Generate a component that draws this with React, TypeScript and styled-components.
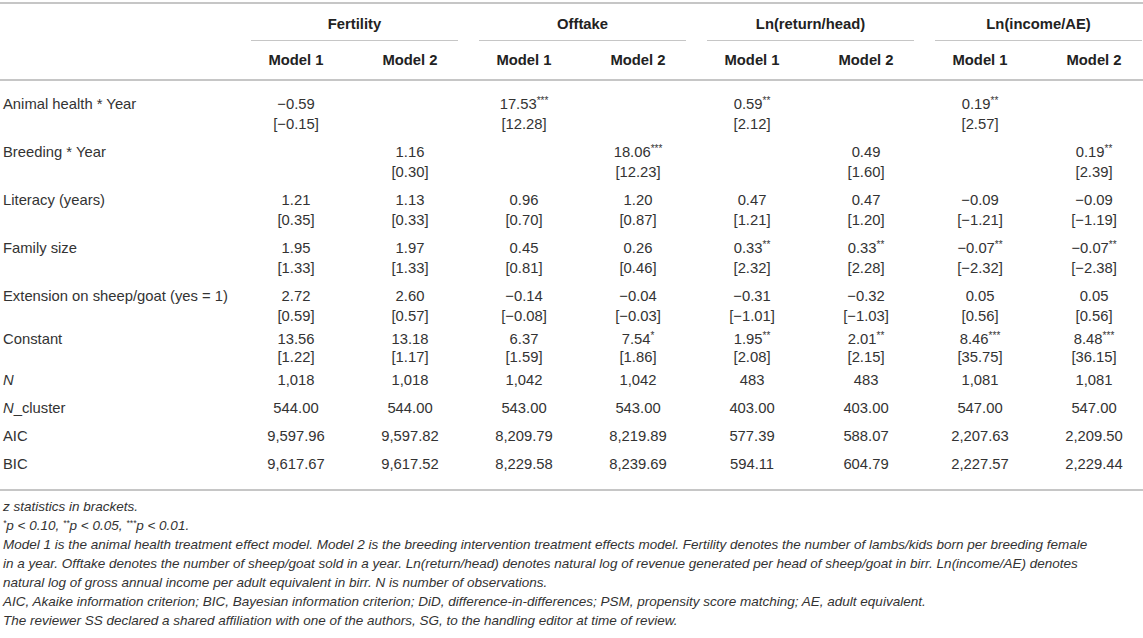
import React from "react";
import styled, { createGlobalStyle } from "styled-components";

const GlobalStyle = createGlobalStyle`
  html, body { margin: 0; padding: 0; background: #fff; overflow: hidden; }
  body { font-family: "Liberation Sans", Arial, Helvetica, sans-serif; color: #333; }
`;

const Page = styled.div`
  padding-top: 2px;
  width: 1151px;
`;

const Table = styled.table`
  width: 1151px;
  table-layout: fixed;
  border-collapse: collapse;
  font-size: 14.8px;
  line-height: 20px;
  border-top: 2px solid #c6c6c6;
  border-bottom: 2px solid #c6c6c6;
`;

const LabelCol = styled.col`
  width: 239px;
`;

const DataCol = styled.col`
  width: 114px;
`;

const HeadRow = styled.tr<{ $bottom?: boolean }>`
  border-bottom: ${(p) => (p.$bottom ? "2px solid #c6c6c6" : "none")};
`;

const GroupTh = styled.th`
  padding: 10px 0 0;
  font-weight: bold;
  color: #222;
  text-align: center;
`;

const GroupLabel = styled.span`
  display: block;
  margin: 0 9px 0 12px;
  padding-bottom: 6px;
  border-bottom: 1px solid #c6c6c6;
`;

const ModelTh = styled.th`
  padding: 9px 0 9px;
  font-weight: bold;
  color: #222;
  text-align: center;
`;

const BodyRow = styled.tr<{ $first?: boolean; $last?: boolean; $tight?: boolean }>`
  & > td {
    padding-top: ${(p) => (p.$first ? "13px" : p.$tight ? "0px" : "4px")};
    padding-bottom: ${(p) => (p.$last ? "15px" : p.$tight ? "0px" : "4px")};
    line-height: ${(p) => (p.$tight ? "18px" : "20px")};
    vertical-align: top;
  }
`;

const LabelCell = styled.td`
  text-align: left;
  padding-left: 3px;
`;

const ValueCell = styled.td`
  text-align: center;
`;

const Line = styled.div`
  white-space: nowrap;
`;

const Stars = styled.sup`
  font-size: 10px;
  line-height: 0;
  vertical-align: 5px;
`;

const Italic = styled.i`
  font-style: italic;
`;

const Notes = styled.div`
  padding: 6px 0 0 3px;
  font-size: 13.5px;
  line-height: 19px;
  font-style: italic;
  color: #333;
  width: 1130px;
`;

const Note = styled.div`
  white-space: nowrap;
`;

const NoteStar = styled.sup`
  font-size: 8.5px;
  line-height: 0;
  vertical-align: 4px;
`;

type Cell = string | [string, string] | null;

interface Row {
  label: React.ReactNode;
  cells: Cell[];
  tight?: boolean;
}

const rows: Row[] = [
  {
    label: "Animal health * Year",
    cells: [["−0.59", "[−0.15]"], null, ["17.53***", "[12.28]"], null, ["0.59**", "[2.12]"], null, ["0.19**", "[2.57]"], null],
  },
  {
    label: "Breeding * Year",
    cells: [null, ["1.16", "[0.30]"], null, ["18.06***", "[12.23]"], null, ["0.49", "[1.60]"], null, ["0.19**", "[2.39]"]],
  },
  {
    label: "Literacy (years)",
    cells: [["1.21", "[0.35]"], ["1.13", "[0.33]"], ["0.96", "[0.70]"], ["1.20", "[0.87]"], ["0.47", "[1.21]"], ["0.47", "[1.20]"], ["−0.09", "[−1.21]"], ["−0.09", "[−1.19]"]],
  },
  {
    label: "Family size",
    cells: [["1.95", "[1.33]"], ["1.97", "[1.33]"], ["0.45", "[0.81]"], ["0.26", "[0.46]"], ["0.33**", "[2.32]"], ["0.33**", "[2.28]"], ["−0.07**", "[−2.32]"], ["−0.07**", "[−2.38]"]],
  },
  {
    label: "Extension on sheep/goat (yes = 1)",
    cells: [["2.72", "[0.59]"], ["2.60", "[0.57]"], ["−0.14", "[−0.08]"], ["−0.04", "[−0.03]"], ["−0.31", "[−1.01]"], ["−0.32", "[−1.03]"], ["0.05", "[0.56]"], ["0.05", "[0.56]"]],
  },
  {
    label: "Constant",
    tight: true,
    cells: [["13.56", "[1.22]"], ["13.18", "[1.17]"], ["6.37", "[1.59]"], ["7.54*", "[1.86]"], ["1.95**", "[2.08]"], ["2.01**", "[2.15]"], ["8.46***", "[35.75]"], ["8.48***", "[36.15]"]],
  },
  {
    label: <Italic>N</Italic>,
    cells: ["1,018", "1,018", "1,042", "1,042", "483", "483", "1,081", "1,081"],
  },
  {
    label: (
      <>
        <Italic>N</Italic>_cluster
      </>
    ),
    cells: ["544.00", "544.00", "543.00", "543.00", "403.00", "403.00", "547.00", "547.00"],
  },
  {
    label: "AIC",
    cells: ["9,597.96", "9,597.82", "8,209.79", "8,219.89", "577.39", "588.07", "2,207.63", "2,209.50"],
  },
  {
    label: "BIC",
    cells: ["9,617.67", "9,617.52", "8,229.58", "8,239.69", "594.11", "604.79", "2,227.57", "2,229.44"],
  },
];

const groups = ["Fertility", "Offtake", "Ln(return/head)", "Ln(income/AE)"];

function Value({ text }: { text: string }) {
  const m = text.match(/^(.*?)(\*+)$/);
  if (!m) return <>{text}</>;
  return (
    <>
      {m[1]}
      <Stars>{m[2]}</Stars>
    </>
  );
}

function renderCell(c: Cell, i: number) {
  if (c === null) return <ValueCell key={i} />;
  if (typeof c === "string")
    return (
      <ValueCell key={i}>
        <Line>
          <Value text={c} />
        </Line>
      </ValueCell>
    );
  return (
    <ValueCell key={i}>
      <Line>
        <Value text={c[0]} />
      </Line>
      <Line>{c[1]}</Line>
    </ValueCell>
  );
}

export default function App() {
  return (
    <Page>
      <GlobalStyle />
      <Table>
        <colgroup>
          <LabelCol />
          {Array.from({ length: 8 }).map((_, i) => (
            <DataCol key={i} />
          ))}
        </colgroup>
        <thead>
          <HeadRow>
            <GroupTh />
            {groups.map((g) => (
              <GroupTh key={g} colSpan={2}>
                <GroupLabel>{g}</GroupLabel>
              </GroupTh>
            ))}
          </HeadRow>
          <HeadRow $bottom>
            <ModelTh />
            {Array.from({ length: 8 }).map((_, i) => (
              <ModelTh key={i}>{i % 2 === 0 ? "Model 1" : "Model 2"}</ModelTh>
            ))}
          </HeadRow>
        </thead>
        <tbody>
          {rows.map((r, idx) => (
            <BodyRow key={idx} $first={idx === 0} $last={idx === rows.length - 1} $tight={r.tight}>
              <LabelCell>{r.label}</LabelCell>
              {r.cells.map((c, i) => renderCell(c, i))}
            </BodyRow>
          ))}
        </tbody>
      </Table>
      <Notes>
        <Note>z statistics in brackets.</Note>
        <Note>
          <NoteStar>*</NoteStar>p &lt; 0.10, <NoteStar>**</NoteStar>p &lt; 0.05, <NoteStar>***</NoteStar>p &lt; 0.01.
        </Note>
        <Note>
          Model 1 is the animal health treatment effect model. Model 2 is the breeding intervention treatment effects model. Fertility denotes the number of lambs/kids born per breeding female
        </Note>
        <Note>
          in a year. Offtake denotes the number of sheep/goat sold in a year. Ln(return/head) denotes natural log of revenue generated per head of sheep/goat in birr. Ln(income/AE) denotes
        </Note>
        <Note>natural log of gross annual income per adult equivalent in birr. N is number of observations.</Note>
        <Note>
          AIC, Akaike information criterion; BIC, Bayesian information criterion; DiD, difference-in-differences; PSM, propensity score matching; AE, adult equivalent.
        </Note>
        <Note>The reviewer SS declared a shared affiliation with one of the authors, SG, to the handling editor at time of review.</Note>
      </Notes>
    </Page>
  );
}
